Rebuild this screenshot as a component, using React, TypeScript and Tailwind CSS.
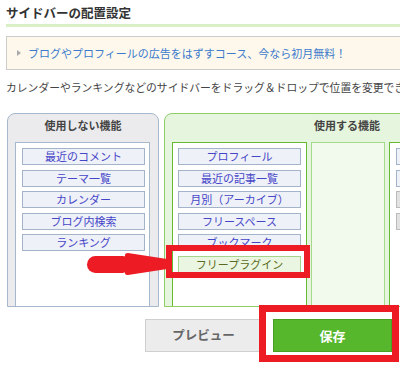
import React from "react";

const leftItems = ["最近のコメント", "テーマ一覧", "カレンダー", "ブログ内検索", "ランキング"];
const col1Items = ["プロフィール", "最近の記事一覧", "月別（アーカイブ）", "フリースペース", "ブックマーク"];

function Item({ label }: { label: string }) {
  return (
    <div className="h-[17px] w-[123px] shrink-0 border border-[#a3b3ca] bg-[#eef1f7] text-center text-[11px] leading-[15px] text-[#4545c8] whitespace-nowrap overflow-hidden">
      {label}
    </div>
  );
}

export default function App() {
  return (
    <div className="relative w-[400px] h-[366px] overflow-hidden bg-white font-['Noto_Sans_CJK_JP','Noto_Sans',sans-serif]">
      <div className="pl-[6px] pt-[4px] h-[24px] text-[12.5px] font-bold leading-[18px] text-[#333333] whitespace-nowrap">
        サイドバーの配置設定
      </div>
      <div className="ml-[6px] h-[3px] bg-[#d9efc6]" />

      <div className="mt-[9px] ml-[6px] w-[430px] h-[34px] border border-[#cccccc] bg-[#fdf8eb] flex items-center pl-[10px]">
        <svg width="4" height="6" viewBox="0 0 4 6" className="shrink-0">
          <polygon points="0,0 4,3 0,6" fill="#aaaaaa" />
        </svg>
        <span className="ml-[7px] text-[11px] leading-[14px] text-[#3c7acb] whitespace-nowrap">
          ブログやプロフィールの広告をはずすコース、今なら初月無料！
        </span>
      </div>

      <div className="mt-[9px] pl-[6px] h-[16px] text-[10.8px] leading-[16px] text-[#444444] whitespace-nowrap">
        カレンダーやランキングなどのサイドバーをドラッグ＆ドロップで位置を変更できます。
      </div>

      <div className="mt-[18px] ml-[7px] flex gap-[5px] h-[194px]">
        <div className="w-[152px] shrink-0 border border-[#a6b8cb] rounded-t-[8px] bg-[#ebebed] flex flex-col">
          <div className="h-[28px] pt-[4px] text-center text-[11px] font-bold leading-[14px] text-[#444444]">
            使用しない機能
          </div>
          <div className="flex-1 ml-[7px] mr-[8px] border-l border-r border-t border-[#a6b8cb] bg-white pl-[6px] pt-[5px] flex flex-col gap-[4.5px]">
            {leftItems.map((l) => (
              <Item key={l} label={l} />
            ))}
          </div>
        </div>

        <div className="w-[366px] shrink-0 border border-[#8fcc6a] rounded-t-[8px] bg-[#e6f5dd] flex flex-col">
          <div className="h-[28px] pt-[4px] text-center text-[11px] font-bold leading-[14px] text-[#444444]">
            使用する機能
          </div>
          <div className="flex-1 flex ml-[7px] gap-[4px]">
            <div className="w-[135px] shrink-0 border-l border-r border-t border-[#66bb33] bg-white pl-[5px] pt-[5px] flex flex-col gap-[4.5px]">
              {col1Items.map((l) => (
                <Item key={l} label={l} />
              ))}
              <div className="h-[17px] w-[123px] shrink-0 border border-[#a3d48a] bg-[#eaf6e1] text-center text-[11px] leading-[15px] text-[#5a6a22] whitespace-nowrap">
                フリープラグイン
              </div>
            </div>
            <div className="w-[74px] shrink-0 border-l border-r border-t border-[#a6d98a] bg-[#f2f9ed]" />
            <div className="w-[135px] shrink-0 border-l border-r border-t border-[#66bb33] bg-white pl-[6px] pt-[5px] flex flex-col gap-[4.5px]">
              <div className="h-[17px] w-[123px] shrink-0 border border-[#a3b3ca] bg-[#eef1f7]" />
              <div className="h-[17px] w-[123px] shrink-0 border border-[#a3b3ca] bg-[#eef1f7]" />
              <div className="h-[17px] w-[123px] shrink-0 border border-[#bbbbbb] bg-[#e2e2e2]" />
              <div className="h-[17px] w-[123px] shrink-0 border border-[#bbbbbb] bg-[#e2e2e2]" />
            </div>
          </div>
        </div>
      </div>

      <div className="mt-[12px] ml-[145px] flex gap-[11px]">
        <div className="w-[117px] h-[33px] border border-[#cfcfcf] bg-[#ececec] flex items-center justify-center text-[12.5px] font-bold text-[#666666]">
          プレビュー
        </div>
        <div className="w-[119px] h-[33px] border border-[#4a9f24] bg-[#57b72c] flex items-center justify-center text-[13px] font-bold text-white">
          保存
        </div>
      </div>

      {/* annotations */}
      <div className="absolute left-[166px] top-[245px] w-[144px] h-[33px] border-[6px] border-[#ed1c24]" />
      <div className="absolute left-[259px] top-[305px] w-[140px] h-[57px] border-[7px] border-[#ed1c24]" />
      <svg className="absolute left-0 top-0" width="400" height="366" viewBox="0 0 400 366">
        <rect x="87" y="256" width="44" height="17" rx="8.5" fill="#ed1c24" />
        <path d="M125 255 Q125 253 128 253 L167 259 L167 269 L128 275 Q125 275 125 273 Z" fill="#ed1c24" />
      </svg>
    </div>
  );
}
